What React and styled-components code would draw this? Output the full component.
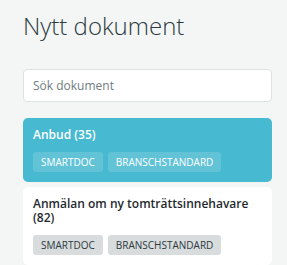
import React from 'react';
import styled, { createGlobalStyle } from 'styled-components';

const GlobalStyle = createGlobalStyle`
  html, body {
    margin: 0;
    padding: 0;
    background: #f4f5f5;
    font-family: 'Open Sans', 'Liberation Sans', sans-serif;
  }
`;

const documents = [
  { title: 'Anbud', count: 35, tags: ['SMARTDOC', 'BRANSCHSTANDARD'], active: true },
  { title: 'Anmälan om ny tomträttsinnehavare', count: 82, tags: ['SMARTDOC', 'BRANSCHSTANDARD'] },
];

export default function App() {
  return (
    <>
      <GlobalStyle />
      <Page>
        <Heading>Nytt dokument</Heading>
        <Search placeholder='Sök dokument' />
        <List>
          {documents.map(doc => (
            <Card key={doc.title} $active={doc.active}>
              <Title>
                {doc.title} ({doc.count})
              </Title>
              <Tags>
                {doc.tags.map(tag => (
                  <Tag key={tag} $active={doc.active}>
                    {tag}
                  </Tag>
                ))}
              </Tags>
            </Card>
          ))}
        </List>
      </Page>
    </>
  );
}

const Page = styled.div`
  padding: 9px 15px 0 23px;
  width: 249px;
`;

const Heading = styled.h1`
  margin: 0;
  font-size: 24px;
  font-weight: 300;
  line-height: 33px;
  color: #2b3a3f;
`;

const Search = styled.input`
  box-sizing: border-box;
  display: block;
  width: 100%;
  height: 33px;
  margin-top: 27px;
  padding: 0 9px;
  border: 1px solid #dfe2e3;
  border-radius: 4px;
  background: #fff;
  font-family: inherit;
  font-size: 12px;
  color: #333;
  outline: none;
  &::placeholder {
    color: #6f7c80;
  }
`;

const List = styled.div`
  display: flex;
  flex-direction: column;
  gap: 5px;
  margin-top: 16px;
`;

const Card = styled.div`
  padding: 8px 10px 10px;
  border-radius: 5px;
  background: ${p => (p.$active ? '#47b9d1' : '#fff')};
  color: ${p => (p.$active ? '#fff' : '#1f2a2e')};
`;

const Title = styled.div`
  font-size: 12px;
  font-weight: 600;
  line-height: 14px;
  padding: 2px 0;
`;

const Tags = styled.div`
  display: flex;
  gap: 5px;
  margin-top: 8px;
`;

const Tag = styled.span`
  height: 20px;
  line-height: 20px;
  padding: 0 8px;
  border-radius: 3px;
  font-size: 10px;
  font-weight: 400;
  background: ${p => (p.$active ? 'rgba(255, 255, 255, 0.15)' : '#d9dcdd')};
  color: ${p => (p.$active ? '#fff' : '#2b3a3f')};
`;
